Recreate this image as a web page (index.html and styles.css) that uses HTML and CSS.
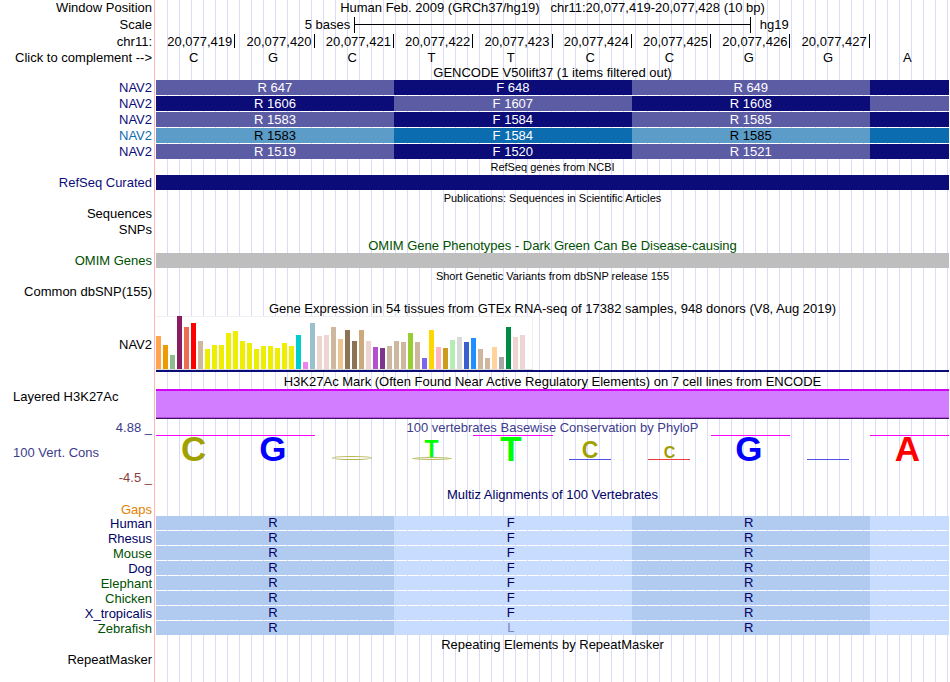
FILE: index.html
```html
<!doctype html>
<html lang="en">

<head>
	<meta charset="UTF-8">
	<title>Human chr11:20,077,419-20,077,428</title>
	<link rel="stylesheet" href="styles.css">
</head>

<body>
	<main class="browser">
		<!-- ruler -->
		<div class="track">
			<div class="label">Window Position</div>
			<h1 class="title">Human Feb. 2009 (GRCh37/hg19) &nbsp; chr11:20,077,419-20,077,428 (10 bp)</h1>
		</div>
		<div class="track scale">
			<div class="label">Scale</div>
			<div class="scale_row">
				<span class="scale_size">5 bases</span>
				<span class="scale_bar"></span>
				<span class="scale_db">hg19</span>
			</div>
		</div>
		<div class="track ruler">
			<div class="label colon">chr11:</div>
			<div class="bases positions">
				<span>20,077,419</span><span>20,077,420</span><span>20,077,421</span><span>20,077,422</span><span>20,077,423</span><span>20,077,424</span><span>20,077,425</span><span>20,077,426</span><span>20,077,427</span>
			</div>
		</div>
		<div class="track complement">
			<div class="label">Click to complement --&gt;</div>
			<div class="bases letters">
				<span>C</span><span>G</span><span>C</span><span>T</span><span>T</span><span>C</span><span>C</span><span>G</span><span>G</span><span>A</span>
			</div>
		</div>

		<!-- GENCODE -->
		<div class="track"><h2 class="title">GENCODE V50lift37 (1 items filtered out)</h2></div>
		<div class="track gene">
			<div class="label">NAV2</div>
			<div class="codons"><span>R 647</span><span>F 648</span><span>R 649</span><span></span></div>
		</div>
		<div class="track gene swap">
			<div class="label">NAV2</div>
			<div class="codons"><span>R 1606</span><span>F 1607</span><span>R 1608</span><span></span></div>
		</div>
		<div class="track gene">
			<div class="label">NAV2</div>
			<div class="codons"><span>R 1583</span><span>F 1584</span><span>R 1585</span><span></span></div>
		</div>
		<div class="track gene blue">
			<div class="label">NAV2</div>
			<div class="codons"><span>R 1583</span><span>F 1584</span><span>R 1585</span><span></span></div>
		</div>
		<div class="track gene">
			<div class="label">NAV2</div>
			<div class="codons"><span>R 1519</span><span>F 1520</span><span>R 1521</span><span></span></div>
		</div>

		<!-- RefSeq, publications, OMIM, dbSNP -->
		<div class="track"><h2 class="title small">RefSeq genes from NCBI</h2></div>
		<div class="track item navy">
			<div class="label">RefSeq Curated</div>
			<div class="bar"></div>
		</div>
		<div class="track"><h2 class="title small">Publications: Sequences in Scientific Articles</h2></div>
		<div class="track"><div class="label">Sequences</div></div>
		<div class="track"><div class="label">SNPs</div></div>
		<div class="track green"><h2 class="title">OMIM Gene Phenotypes - Dark Green Can Be Disease-causing</h2></div>
		<div class="track item omim green">
			<div class="label">OMIM Genes</div>
			<div class="bar"></div>
		</div>
		<div class="track"><h2 class="title small">Short Genetic Variants from dbSNP release 155</h2></div>
		<div class="track snp"><div class="label">Common dbSNP(155)</div></div>

		<!-- GTEx -->
		<div class="track"><h2 class="title">Gene Expression in 54 tissues from GTEx RNA-seq of 17382 samples, 948 donors (V8, Aug 2019)</h2></div>
		<div class="track gtex">
			<div class="label">NAV2</div>
			<div class="gtex_plot">
				<div class="gtex_bars" id="gtex"></div>
			</div>
		</div>

		<!-- H3K27Ac -->
		<div class="track"><h2 class="title">H3K27Ac Mark (Often Found Near Active Regulatory Elements) on 7 cell lines from ENCODE</h2></div>
		<div class="track layered">
			<div class="label left">Layered H3K27Ac</div>
			<div class="signal"></div>
		</div>

		<!-- conservation -->
		<div class="track phylop">
			<div class="axis">
				<div class="label">4.88 _</div>
				<div class="label left">100 Vert. Cons</div>
				<div class="label min">-4.5 _</div>
			</div>
			<div>
				<h2 class="title">100 vertebrates Basewise Conservation by PhyloP</h2>
				<div class="bases logo">
					<span class="clip"><b class="c tall">C</b></span>
					<span class="clip"><b class="g tall">G</b></span>
					<span><i class="ring"></i></span>
					<span><b class="t mid">T</b><i class="ring thin"></i></span>
					<span class="clip"><b class="t tall">T</b></span>
					<span><b class="c mid">C</b><i class="dash"></i></span>
					<span><b class="c low">C</b><i class="dash red"></i></span>
					<span class="clip"><b class="g tall">G</b></span>
					<span><i class="dash"></i></span>
					<span class="clip"><b class="a tall">A</b></span>
				</div>
			</div>
		</div>

		<!-- multiz -->
		<div class="track multiz_title"><h2 class="title">Multiz Alignments of 100 Vertebrates</h2></div>
		<div class="track gaps"><div class="label">Gaps</div></div>
		<div class="track species">
			<div class="label">Human</div>
			<div class="codons"><span>R</span><span>F</span><span>R</span><span></span></div>
		</div>
		<div class="track species">
			<div class="label">Rhesus</div>
			<div class="codons"><span>R</span><span>F</span><span>R</span><span></span></div>
		</div>
		<div class="track species alt">
			<div class="label">Mouse</div>
			<div class="codons"><span>R</span><span>F</span><span>R</span><span></span></div>
		</div>
		<div class="track species">
			<div class="label">Dog</div>
			<div class="codons"><span>R</span><span>F</span><span>R</span><span></span></div>
		</div>
		<div class="track species alt">
			<div class="label">Elephant</div>
			<div class="codons"><span>R</span><span>F</span><span>R</span><span></span></div>
		</div>
		<div class="track species alt">
			<div class="label">Chicken</div>
			<div class="codons"><span>R</span><span>F</span><span>R</span><span></span></div>
		</div>
		<div class="track species">
			<div class="label">X_tropicalis</div>
			<div class="codons"><span>R</span><span>F</span><span>R</span><span></span></div>
		</div>
		<div class="track species alt">
			<div class="label">Zebrafish</div>
			<div class="codons"><span>R</span><span class="differs">L</span><span>R</span><span></span></div>
		</div>

		<!-- RepeatMasker -->
		<div class="track repeat_title"><h2 class="title">Repeating Elements by RepeatMasker</h2></div>
		<div class="track"><div class="label">RepeatMasker</div></div>
	</main>
	<script>
		// one entry per tissue: bar height, colour
		var tissues = [
			[33, "#ffa54f"], [24, "#ee9a00"], [14, "#8fbc8f"], [53, "#8b1c62"], [42, "#ee6a50"],
			[46, "#ff0000"], [28, "#cdb79e"], [20, "#eeee00"], [24, "#eeee00"], [24, "#eeee00"],
			[36, "#eeee00"], [38, "#eeee00"], [28, "#eeee00"], [26, "#eeee00"], [20, "#eeee00"],
			[23, "#eeee00"], [23, "#eeee00"], [21, "#eeee00"], [26, "#eeee00"], [23, "#eeee00"],
			[34, "#00cdcd"], [7, "#ee82ee"], [46, "#9ac0cd"], [33, "#eed5d2"], [34, "#eed5d2"],
			[42, "#cdb79e"], [30, "#eec591"], [39, "#8b7355"], [28, "#8b7355"], [39, "#cdaa7d"],
			[28, "#eed5d2"], [22, "#b452cd"], [21, "#7a378b"], [23, "#cdb79e"], [28, "#cdb79e"],
			[27, "#cdb79e"], [36, "#9acd32"], [27, "#cdb79e"], [11, "#7a67ee"], [39, "#ffd700"],
			[22, "#ffb6c1"], [21, "#cd9b1d"], [29, "#b4eeb4"], [32, "#d9d9d9"], [27, "#3a5fcd"],
			[31, "#1e90ff"], [20, "#cdb79e"], [11, "#cdb79e"], [22, "#ffd39b"], [12, "#a6a6a6"],
			[42, "#008b45"], [32, "#eed5d2"], [34, "#eed5d2"], [0, "#ff00ff"]
		];
		var gtex = document.getElementById("gtex");
		for (var i = 0; i < tissues.length; i++) {
			var bar = document.createElement("span");
			bar.style.height = tissues[i][0] + "px";
			bar.style.background = tissues[i][1];
			gtex.appendChild(bar);
		}
	</script>
</body>

</html>
```

FILE: styles.css
```css
* {
	box-sizing: border-box;
}

body {
	margin: 0;
	background: #fff;
	color: #000;
	font: 13px/16px "Liberation Sans", Arial, sans-serif;
}

/* guide lines every 12px, red line between labels and data */
.browser {
	min-height: 100vh;
	background:
		linear-gradient(#ffb4b4, #ffb4b4) 154px 0 / 1px 100% no-repeat,
		repeating-linear-gradient(to right, transparent 0 11px, #dcdcf8 11px 12px) 156px 0 no-repeat;
}

.track {
	display: grid;
	grid-template-columns: 152px 1fr;
	column-gap: 4px;
	padding-right: 1px;
}

.label {
	text-align: right;
	white-space: nowrap;
}

.label.left {
	padding-left: 13px;
	text-align: left;
}

.title {
	grid-column: 2;
	margin: 0;
	font-size: 13px;
	font-weight: normal;
	line-height: 15px;
	text-align: center;
	white-space: nowrap;
}

.small {
	font-size: 11px;
}

.green {
	color: #005000;
}

/* ruler */
.scale {
	padding-top: 1px;
}

.scale_row {
	display: grid;
	grid-template-columns: 1fr 2fr 1fr;
	line-height: 15px;
}

.scale_size {
	padding-right: 4px;
	text-align: right;
}

.scale_bar {
	border: solid #000;
	border-width: 0 1px;
	background: linear-gradient(#000, #000) 0 7px / 100% 1px no-repeat;
}

.scale_db {
	padding-left: 9px;
}

.bases {
	display: grid;
	grid-template-columns: repeat(10, 1fr);
}

.ruler {
	padding-top: 1px;
}

.positions span {
	height: 14px;
	padding-right: 2px;
	border-right: 1px solid #000;
	text-align: right;
}

.complement {
	line-height: 15px;
}

.letters span {
	padding-right: 4px;
	text-align: center;
}

/* genes */
.codons {
	display: grid;
	grid-template-columns: 3fr 3fr 3fr 1fr;
	text-align: center;
}

.gene {
	height: 16px;
	color: #0c0c78;
	line-height: 15px;
}

.gene .codons {
	height: 15px;
	color: #fff;
}

.gene span:nth-child(odd) {
	background: #5c5ca4;
}

.gene span:nth-child(even) {
	background: #0c0c78;
}

.swap span:nth-child(odd) {
	background: #0c0c78;
}

.swap span:nth-child(even) {
	background: #5c5ca4;
}

.blue {
	color: #0c6cb0;
}

.blue span:nth-child(odd) {
	background: #5c9cc8;
	color: #000;
}

.blue span:nth-child(even) {
	background: #0c6cb0;
}

.item {
	margin-bottom: 1px;
	line-height: 15px;
}

.navy {
	color: #0c0c78;
}

.bar {
	height: 15px;
	background: #0c0c78;
}

.omim .bar {
	background: #bebebe;
}

.snp {
	margin-bottom: 1px;
}

/* expression bars */
.gtex {
	margin-bottom: 2px;
}

.gtex .label {
	padding-top: 21px;
}

.gtex_plot {
	border-bottom: 2px solid #0c0c78;
}

.gtex_bars {
	display: flex;
	align-items: flex-end;
	gap: 2px;
	width: 377px;
	height: 54px;
	border-bottom: 1px solid #dcdcdc;
	background: #fff;
	box-shadow: inset -1px 1px #f0f0f0;
}

.gtex_bars span {
	width: 5px;
}

.layered {
	margin-bottom: 1px;
}

.signal {
	height: 30px;
	border-top: 2px solid #d200f5;
	border-bottom: 1px solid #3c1464;
	background: #d27dff;
	box-shadow: inset 0 -1px #b450d7;
}

/* conservation */
.phylop {
	color: #3c3c8c;
}

.axis {
	display: grid;
	row-gap: 9px;
}

.min {
	color: #8c3c3c;
}

.logo {
	line-height: 24px;
}

.logo span {
	display: flex;
	flex-direction: column;
	align-items: center;
	justify-content: flex-end;
	height: 26px;
	padding-right: 4px;
	border-top: 1px solid transparent;
}

.logo .clip {
	border-top-color: #f0f;
}

.tall {
	font-size: 35px;
	line-height: 24px;
}

.mid {
	font-size: 23px;
	line-height: 16px;
}

.low {
	font-size: 16px;
	line-height: 11px;
}

.a {
	color: #f00;
}

.c {
	color: #a0a000;
}

.g {
	color: #00f;
}

.t {
	color: #0f0;
}

.ring {
	width: 40px;
	height: 4px;
	margin-bottom: 1px;
	border: 1px solid #b4b450;
	border-radius: 50%;
}

.thin {
	height: 3px;
}

.dash {
	width: 42px;
	height: 1px;
	margin: 1px 0;
	background: #5050e6;
}

.dash.red {
	background: #f03c3c;
}

/* alignments */
.multiz_title {
	padding-top: 1px;
	color: #000064;
}

.gaps {
	margin-bottom: -1px;
	color: #e68200;
	line-height: 15px;
}

.species {
	height: 15px;
	color: #000064;
	line-height: 15px;
}

.species .codons {
	height: 14px;
	color: #000064;
	line-height: 14px;
}

.species span {
	padding-right: 4px;
	background: #c8dcff;
}

.species span:nth-child(odd) {
	background: #b0caf0;
}

.alt {
	color: #005000;
}

.species .differs {
	color: #8080b4;
}

.repeat_title {
	padding-top: 1px;
}
```
